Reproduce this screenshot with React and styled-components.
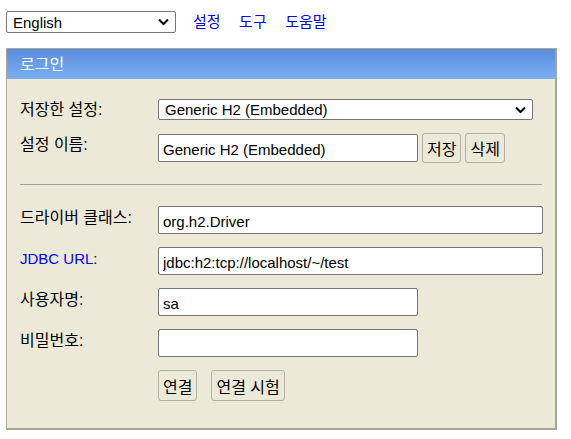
import styled, { createGlobalStyle } from "styled-components";

const GlobalStyle = createGlobalStyle`
  body {
    margin: 0;
    background: #fff;
    font-family: "Liberation Sans", "Noto Sans CJK KR", Arial, sans-serif;
    font-size: 15px;
    color: #000;
  }
`;

const FONT = `"Liberation Sans", "Noto Sans CJK KR", Arial, sans-serif`;
// Hangul in Noto CJK runs a bit small next to the original's Korean font
const KO_SIZE = 16;

const Page = styled.div`
  padding: 11px 0 0 6px;
`;

const TopBar = styled.div`
  display: flex;
  align-items: center;
  height: 22px;
`;

const Nav = styled.nav`
  display: flex;
  gap: 18.5px;
  margin-left: 17px;
`;

const NavLink = styled.a`
  color: #0000ff;
  text-decoration: none;
  font-size: 15px;
  line-height: 18px;
  cursor: pointer;
`;

const SelectWrap = styled.div`
  position: relative;
  display: inline-flex;
  width: ${(p) => p.$width}px;
  height: ${(p) => p.$height}px;
`;

const Select = styled.select`
  appearance: none;
  width: 100%;
  height: 100%;
  box-sizing: border-box;
  border: 1px solid #767676;
  border-radius: 2px;
  background: #fff;
  padding: 0 24px 0 6px;
  font-family: ${FONT};
  font-size: 15px;
  color: #000;
`;

const Chevron = styled.svg`
  position: absolute;
  right: 7px;
  top: 50%;
  transform: translateY(-50%);
  pointer-events: none;
`;

const Panel = styled.div`
  margin-top: 15px;
  width: 551px;
  box-sizing: border-box;
  background: #ece9d8;
  border-top: 1px solid #aca899;
  border-left: 1px solid #aca899;
  border-right: 2px solid #a7a596;
  border-bottom: 2px solid #a7a596;
`;

const Header = styled.div`
  height: 30px;
  display: flex;
  align-items: center;
  padding-left: 13px;
  padding-bottom: 2px;
  box-sizing: border-box;
  background: linear-gradient(#5b8ddb, #7ab0f2);
  color: #fff;
  font-size: ${KO_SIZE}px;
`;

const Body = styled.div`
  display: flex;
  flex-direction: column;
  padding: 20px 0 27px 13px;
`;

const Row = styled.div`
  display: flex;
  align-items: ${(p) => (p.$center ? "center" : "flex-start")};
  margin-top: ${(p) => p.$top || 0}px;
`;

const Label = styled.div`
  width: 138px;
  flex: none;
  font-size: ${(p) => (p.$latin ? 15 : KO_SIZE)}px;
  line-height: 18px;
  padding-top: ${(p) => p.$pad || 0}px;
  white-space: nowrap;
`;

const LabelLink = styled.a`
  color: #0000ff;
  text-decoration: none;
`;

const Controls = styled.div`
  display: flex;
  align-items: center;
  gap: ${(p) => p.$gap || 4}px;
`;

const Input = styled.input`
  width: ${(p) => p.$width}px;
  height: 28px;
  box-sizing: border-box;
  border: 1px solid #767676;
  border-radius: 2px;
  background: #fff;
  padding: 2px 4px 0;
  font-family: ${FONT};
  font-size: 15px;
  color: #000;
  outline: none;
`;

const Button = styled.button`
  height: ${(p) => p.$height || 30}px;
  box-sizing: border-box;
  padding: 0 4px;
  border: 1px solid #b1ae9f;
  border-radius: 3px;
  background: #ece9d8;
  font-family: ${FONT};
  font-size: ${KO_SIZE}px;
  color: #000;
  cursor: pointer;
`;

const Divider = styled.hr`
  margin: 21px 13px 21px 0;
  border: none;
  border-top: 1px solid #a09f98;
  height: 0;
`;

const ChevronIcon = () => (
  <Chevron width="11" height="7" viewBox="0 0 11 7">
    <path d="M1 1 L5.5 5.5 L10 1" fill="none" stroke="#000" strokeWidth="2" />
  </Chevron>
);

export default function App() {
  return (
    <>
      <GlobalStyle />
      <Page>
        <TopBar>
          <SelectWrap $width={170} $height={22}>
            <Select defaultValue="en">
              <option value="en">English</option>
              <option value="ko">한국어</option>
            </Select>
            <ChevronIcon />
          </SelectWrap>
          <Nav>
            <NavLink>설정</NavLink>
            <NavLink>도구</NavLink>
            <NavLink>도움말</NavLink>
          </Nav>
        </TopBar>

        <Panel>
          <Header>로그인</Header>
          <Body>
            <Row $center>
              <Label>저장한 설정:</Label>
              <SelectWrap $width={375} $height={21}>
                <Select defaultValue="h2">
                  <option value="h2">Generic H2 (Embedded)</option>
                </Select>
                <ChevronIcon />
              </SelectWrap>
            </Row>
            <Row $top={13}>
              <Label $pad={3}>설정 이름:</Label>
              <Controls>
                <Input $width={260} defaultValue="Generic H2 (Embedded)" />
                <Button>저장</Button>
                <Button>삭제</Button>
              </Controls>
            </Row>

            <Divider />

            <Row>
              <Label $pad={3}>드라이버 클래스:</Label>
              <Input $width={385} defaultValue="org.h2.Driver" />
            </Row>
            <Row $top={13}>
              <Label $pad={3} $latin>
                <LabelLink>JDBC URL</LabelLink>:
              </Label>
              <Input $width={385} defaultValue="jdbc:h2:tcp://localhost/~/test" />
            </Row>
            <Row $top={13}>
              <Label $pad={3}>사용자명:</Label>
              <Input $width={260} defaultValue="sa" />
            </Row>
            <Row $top={13}>
              <Label $pad={3}>비밀번호:</Label>
              <Input $width={260} type="password" />
            </Row>
            <Row $top={13}>
              <Label />
              <Controls $gap={14}>
                <Button $height={31}>연결</Button>
                <Button $height={31}>연결 시험</Button>
              </Controls>
            </Row>
          </Body>
        </Panel>
      </Page>
    </>
  );
}
